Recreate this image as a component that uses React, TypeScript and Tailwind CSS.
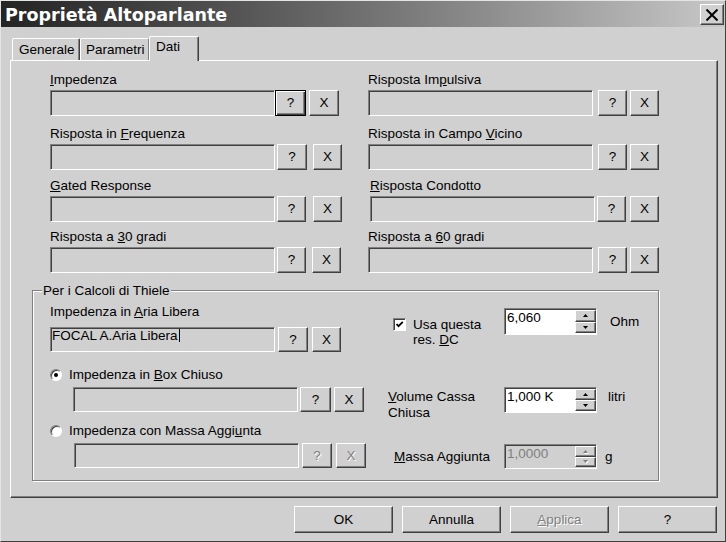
import type { ReactNode } from "react";

const raised =
  "border border-t-white border-l-white border-r-[#404040] border-b-[#404040] shadow-[inset_-1px_-1px_0_#808080]";
const sunken =
  "border border-t-[#808080] border-l-[#808080] border-r-white border-b-white shadow-[inset_1px_1px_0_#404040]";

function Btn({
  children,
  className = "",
  focused = false,
  disabled = false,
}: {
  children: ReactNode;
  className?: string;
  focused?: boolean;
  disabled?: boolean;
}) {
  return (
    <div
      className={`flex shrink-0 items-center justify-center leading-[16px] ${
        focused
          ? "border border-black shadow-[inset_1px_1px_0_#fff,inset_-1px_-1px_0_#404040,inset_-2px_-2px_0_#808080]"
          : raised
      } ${disabled ? "text-[#808080] [text-shadow:1px_1px_0_#fff]" : "text-black"} ${className}`}
    >
      {children}
    </div>
  );
}

function Input({ className = "", children }: { className?: string; children?: ReactNode }) {
  return (
    <div className={`shrink-0 bg-[#d0d0d0] pl-[1px] leading-[16px] ${sunken} ${className}`}>
      {children}
    </div>
  );
}

// campo con etichetta + pulsanti ? e X
function Field({
  label,
  box = "",
  q,
  x,
  focused = false,
}: {
  label: ReactNode;
  box?: string;
  q: string;
  x: string;
  focused?: boolean;
}) {
  return (
    <div className={box}>
      <div className="h-[16px] leading-[16px]">{label}</div>
      <div className="mt-[2px] flex">
        <Input className="h-[26px] w-[225px]" />
        <Btn focused={focused} className={`h-[26px] ${q}`}>
          ?
        </Btn>
        <Btn className={`h-[26px] ${x}`}>X</Btn>
      </div>
    </div>
  );
}

function Arrow({ up, disabled }: { up: boolean; disabled?: boolean }) {
  return (
    <svg width="5" height="3" viewBox="0 0 5 3" className={disabled ? "drop-shadow-[1px_1px_0_#fff]" : ""}>
      <polygon
        points={up ? "2.5,0 5,3 0,3" : "0,0 5,0 2.5,3"}
        fill={disabled ? "#808080" : "#000"}
      />
    </svg>
  );
}

function Spinner({ value, disabled = false, className = "" }: { value: string; disabled?: boolean; className?: string }) {
  return (
    <div
      className={`flex w-[93px] shrink-0 ${sunken} ${disabled ? "bg-[#d0d0d0] text-[#808080]" : "bg-white text-black"} ${className}`}
    >
      <div className="flex-1 pl-[2px] pt-[1px] leading-[16px]">{value}</div>
      <div className="flex w-[21px] flex-col pt-[1px] pb-[1px]">
        <div className={`flex flex-1 items-center justify-center bg-[#d0d0d0] ${raised}`}>
          <Arrow up disabled={disabled} />
        </div>
        <div className={`flex flex-1 items-center justify-center bg-[#d0d0d0] ${raised}`}>
          <Arrow up={false} disabled={disabled} />
        </div>
      </div>
    </div>
  );
}

function Radio({ checked }: { checked: boolean }) {
  return (
    <div className="flex h-[12px] w-[12px] shrink-0 items-center justify-center rounded-full border border-t-[#808080] border-l-[#808080] border-r-white border-b-white bg-white shadow-[inset_1px_1px_0_#404040]">
      {checked && <div className="h-[4px] w-[4px] rounded-full bg-black" />}
    </div>
  );
}

export default function App() {
  return (
    <div className="h-[542px] w-[726px] overflow-hidden border border-t-[#e4e4e4] border-l-[#e4e4e4] border-r-[#404040] border-b-[#404040] bg-[#d0d0d0] font-['Liberation_Sans',Arial,sans-serif] text-[13.5px] text-black">
      {/* Title bar */}
      <div className="flex h-[26px] items-start justify-between bg-linear-to-r from-[#242424] to-[#c8c8c8]">
        <div className="mt-[4px] pl-[4px] font-['DejaVu_Sans',sans-serif] text-[17.5px] font-bold leading-[20px] text-white">
          Proprietà Altoparlante
        </div>
        <div className={`mt-[3px] mr-[1px] flex h-[21px] w-[24px] items-center justify-center bg-[#d0d0d0] ${raised}`}>
          <svg width="12" height="12" viewBox="0 0 12 12">
            <path d="M0.5 0.5 L11.5 11.5 M11.5 0.5 L0.5 11.5" stroke="#000" strokeWidth="2" />
          </svg>
        </div>
      </div>

      {/* Tabs */}
      <div className="mt-[9px] ml-[11px] flex h-[24px] items-end">
        <div className="h-[22px] w-[68px] rounded-t-[2px] border-t border-l border-r border-t-white border-l-white border-r-[#404040] pt-[3px] pl-[6px] leading-[16px] shadow-[inset_-1px_0_0_#808080]">
          Generale
        </div>
        <div className="h-[22px] w-[69px] rounded-t-[2px] border-t border-l border-r border-t-white border-l-white border-r-[#808080] pt-[3px] pl-[5px] leading-[16px]">
          Parametri
        </div>
        <div className="relative z-10 -mb-px h-[25px] w-[50px] rounded-t-[2px] border-t border-l border-r border-t-white border-l-white border-r-[#404040] bg-[#d0d0d0] pt-[2px] pl-[6px] leading-[16px] shadow-[inset_-1px_0_0_#808080]">
          Dati
        </div>
      </div>

      {/* Tab panel */}
      <div className={`ml-[9px] h-[438px] w-[708px] pt-[11px] pl-[21px] ${raised}`}>
        <div className="pl-[18px]">
          <div className="flex">
            <Field
              box="w-[318px]"
              label={<><u>I</u>mpedenza</>}
              q="w-[31px]"
              x="ml-[3px] w-[30px]"
              focused
            />
            <Field
              label={<>Risposta Im<u>p</u>ulsiva</>}
              q="ml-[5px] w-[29px]"
              x="ml-[3px] w-[29px]"
            />
          </div>
          <div className="mt-[10px] flex">
            <Field
              box="w-[318px]"
              label={<>Risposta in <u>F</u>requenza</>}
              q="ml-[2px] w-[30px]"
              x="ml-[6px] w-[29px]"
            />
            <Field
              label={<>Risposta in Campo <u>V</u>icino</>}
              q="ml-[5px] w-[29px]"
              x="ml-[3px] w-[29px]"
            />
          </div>
          <div className="mt-[8px] flex">
            <Field
              box="w-[318px]"
              label={<><u>G</u>ated Response</>}
              q="ml-[2px] w-[29px]"
              x="ml-[7px] w-[29px]"
            />
            <Field
              box="ml-[2px]"
              label={<><u>R</u>isposta Condotto</>}
              q="ml-[2px] w-[29px]"
              x="ml-[4px] w-[29px]"
            />
          </div>
          <div className="mt-[7px] flex">
            <Field
              box="w-[318px]"
              label={<>Risposta a <u>3</u>0 gradi</>}
              q="ml-[2px] w-[29px]"
              x="ml-[6px] w-[29px]"
            />
            <Field
              label={<>Risposta a <u>6</u>0 gradi</>}
              q="ml-[5px] w-[29px]"
              x="ml-[3px] w-[29px]"
            />
          </div>
        </div>

        {/* Group box */}
        <div className="relative mt-[17px] h-[191px] w-[627px] border border-[#808080] shadow-[inset_1px_1px_0_#fff,1px_1px_0_#fff]">
          <span className="absolute top-[-8px] left-[9px] bg-[#d0d0d0] px-[1px] leading-[16px]">
            Per i Calcoli di Thiele
          </span>
          <div className="flex pl-[17px]">
            {/* left column */}
            <div className="w-[338px] shrink-0">
              <div className="mt-[13px] h-[16px] leading-[16px]">
                Impedenza in <u>A</u>ria Libera
              </div>
              <div className="mt-[7px] flex">
                <Input className="h-[25px] w-[225px]">
                  FOCAL A.Aria Libera
                  <span className="ml-[1px] inline-block h-[13px] w-[1px] bg-black align-[-2px]" />
                </Input>
                <Btn className="ml-[3px] h-[25px] w-[30px]">?</Btn>
                <Btn className="ml-[4px] h-[25px] w-[29px]">X</Btn>
              </div>

              <div className="mt-[15px] flex h-[16px] items-center">
                <Radio checked />
                <span className="ml-[7px] leading-[16px]">
                  Impedenza in <u>B</u>ox Chiuso
                </span>
              </div>
              <div className="mt-[4px] ml-[23px] flex">
                <Input className="h-[25px] w-[225px]" />
                <Btn className="ml-[2px] h-[25px] w-[31px]">?</Btn>
                <Btn className="ml-[3px] h-[25px] w-[30px]">X</Btn>
              </div>

              <div className="mt-[11px] flex h-[16px] items-center">
                <Radio checked={false} />
                <span className="ml-[7px] leading-[16px]">
                  Impedenza con Massa Aggi<u>u</u>nta
                </span>
              </div>
              <div className="mt-[4px] ml-[24px] flex">
                <Input className="h-[25px] w-[225px]" />
                <Btn disabled className="ml-[3px] h-[25px] w-[30px]">?</Btn>
                <Btn disabled className="ml-[4px] h-[25px] w-[30px]">X</Btn>
              </div>
            </div>

            {/* right column */}
            <div className="flex-1">
              <div className="mt-[17px] flex h-[27px]">
                <div className="flex w-[116px] shrink-0 items-start">
                  <div className={`mt-[10px] ml-[5px] flex h-[13px] w-[13px] items-center justify-center bg-white ${sunken}`}>
                    <svg width="9" height="9" viewBox="0 0 9 9">
                      <path d="M1.5 4 L3.5 6.2 L7.8 1.8" fill="none" stroke="#000" strokeWidth="1.8" />
                    </svg>
                  </div>
                  <div className="mt-[9px] ml-[7px] leading-[15px]">
                    Usa questa
                    <br />
                    res. <u>D</u>C
                  </div>
                </div>
                <Spinner value="6,060" className="h-[27px]" />
                <div className="mt-[6px] ml-[13px] leading-[16px]">Ohm</div>
              </div>

              <div className="mt-[52px] flex h-[26px]">
                <div className="mt-[2px] w-[116px] shrink-0 leading-[16px]">
                  <u>V</u>olume Cassa
                  <br />
                  Chiusa
                </div>
                <Spinner value="1,000 K" className="h-[26px]" />
                <div className="mt-[2px] ml-[11px] leading-[16px]">litri</div>
              </div>

              <div className="mt-[31px] flex h-[25px]">
                <div className="mt-[5px] w-[116px] shrink-0 pl-[6px] leading-[16px]">
                  <u>M</u>assa Aggiunta
                </div>
                <Spinner value="1,0000" disabled className="h-[25px]" />
                <div className="mt-[5px] ml-[8px] leading-[16px]">g</div>
              </div>
            </div>
          </div>
        </div>
      </div>

      {/* Dialog buttons */}
      <div className="mt-[8px] flex justify-end gap-[9px] pr-[8px]">
        <Btn className="h-[27px] w-[99px]">OK</Btn>
        <Btn className="h-[27px] w-[99px]">Annulla</Btn>
        <Btn disabled className="h-[27px] w-[99px]">
          <u>A</u>pplica
        </Btn>
        <Btn className="h-[27px] w-[99px]">?</Btn>
      </div>
    </div>
  );
}
